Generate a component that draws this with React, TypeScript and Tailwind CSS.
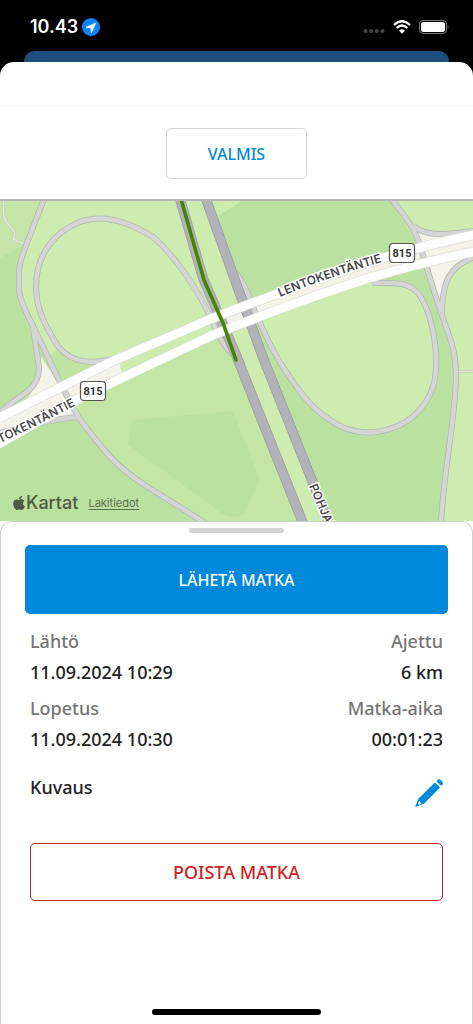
import { FaApple } from "react-icons/fa";

const details = [
  { label: "Lähtö", value: "11.09.2024 10:29" },
  { label: "Ajettu", value: "6 km" },
  { label: "Lopetus", value: "11.09.2024 10:30" },
  { label: "Matka-aika", value: "00:01:23" },
];

// ramps and side roads
const ramps = [
  "M44 199 L27 243 Q19 263 19 272 V290 Q20 301 34 328 L57 376 Q76 416 88 430 C106 453 116 466 143 484 L205 523",
  "M33 328 L38 360 Q42 380 28 391 Q16 400 -3 414",
  "M118 358 C90 365 71 363 58 346 C44 325 36 307 36 287 C36 255 54 232 80 222 C101 214 126 220 153 237 C173 254 196 286 211 318 Q219 340 232 354",
  "M78 417 Q50 419 -3 434",
  "M231 268 Q242 279 247 292 C260 325 270 347 283 367 C302 396 313 411 340 426 C366 438 387 431 400 425 C416 417 435 399 436 369 C437 340 430 310 419 294 C407 281 394 283 372 283",
  "M391 199 Q413 225 418 240 C425 260 433 290 442 315 C450 339 456 350 456 375 C456 416 444 468 441 523",
  "M414 226 Q423 235 446 234 L475 231",
  "M475 257 C449 266 442 282 442 315",
];

const motorways = [
  "M180 199 L203 278 L236 355 L303 523",
  "M206 199 L245 308 L262 355 L329 523",
];

const carriageways = [
  "M-5 420 L63 386 L113 361 L213 318 Q300 284 386 257 Q430 244 478 234",
  "M-5 446 L80 398 L145 367 L213 335 Q300 300 366 279 Q430 260 478 251",
];

const places = "fill-[#484848] stroke-white stroke-[3px] font-semibold text-[12px] font-[Inter,sans-serif] [paint-order:stroke] [stroke-linejoin:round]";

function Shield({ x, y }: { x: number; y: number }) {
  return (
    <g transform={`translate(${x} ${y})`}>
      <rect x="-12.5" y="-9.5" width="25" height="19" rx="3.5" fill="#fff" stroke="#555" strokeWidth="1.2" />
      <text y="4" textAnchor="middle" className="fill-[#333] text-[11px] font-bold font-[Roboto,sans-serif]">
        815
      </text>
    </g>
  );
}

function RouteMap() {
  return (
    <svg viewBox="0 201 473 320" preserveAspectRatio="xMidYMid slice" className="block size-full" role="img" aria-label="Matkan reitti">
      <defs>
        <path id="road-east" d="M280 297 Q330 276 390 260" />
        <path id="road-west" d="M-21 453 Q27 431 88 399" />
        <path id="road-south" d="M309 486 L345 571" />
      </defs>

      {/* land cover */}
      <rect y="201" width="473" height="320" fill="#ceebb0" />
      <path d="M0 201 H44 L19 270 V290 L34 328 L78 417 L143 484 L205 521 H0 Z" fill="#bbe1a0" />
      <path d="M0 201 H44 L24 245 L0 258 Z" fill="#c4e5a7" />
      <path d="M48 360 L58 346 L75 360 L118 358 L66 385 Z" fill="#c0e4a3" />
      <path d="M78 400 L145 370 L228 333 L303 521 H203 L143 484 L78 417 Z" fill="#c4e6a5" />
      <path d="M132 420 L233 411 L260 480 L245 512 Q238 521 222 514 L168 474 L128 445 Z" fill="#bbe1a0" />
      <path d="M213 219 L242 201 H391 L418 245 L300 282 L245 306 Z" fill="#bbe1a0" />
      <path d="M248 310 L262 322 L283 367 C302 396 313 411 340 426 C366 438 387 431 400 425 C416 417 435 399 436 369 C437 340 430 310 419 294 C407 281 394 283 362 282 L430 262 L442 315 L456 375 L441 521 H327 L262 355 Z" fill="#bbe1a0" />

      {/* medians */}
      <g fill="#f5f2e9">
        <path d="M225 314 Q300 284 386 257 L478 234 V251 Q430 260 366 279 Q300 300 228 328 Z" />
        <path d="M-5 420 L63 386 L119 362 L123 377 L80 398 L-5 446 Z" />
        <path d="M416 230 L430 236 L473 234 V258 Q441 270 442 307 L430 270 Z" />
        <path d="M40 355 L60 386 L20 407 Q45 380 40 355 Z" />
        <path d="M40 420 L72 399 L79 417 Z" />
      </g>

      {/* footpaths */}
      <g fill="none" stroke="#bcc7b3" strokeWidth="2.4">
        <path d="M4 201 Q2 217 7 223 L14 231 Q16 235 13 239 L24 244" />
        <path d="M458 372 L473 371" />
      </g>
      <g fill="none" stroke="#e2e6dc" strokeWidth="1.6">
        <path d="M4 201 Q2 217 7 223 L14 231 Q16 235 13 239 L24 244" />
        <path d="M458 372 L473 371" />
      </g>

      <g fill="none" stroke="#b2b8b2" strokeWidth="6">
        {ramps.map((d) => <path key={d} d={d} />)}
      </g>
      <g fill="none" stroke="#d4d6d6" strokeWidth="4.4">
        {ramps.map((d) => <path key={d} d={d} />)}
      </g>
      <g fill="none" stroke="#9b9da3" strokeWidth="10">
        {motorways.map((d) => <path key={d} d={d} />)}
      </g>
      <g fill="none" stroke="#b2b3ba" strokeWidth="8.4">
        {motorways.map((d) => <path key={d} d={d} />)}
      </g>
      <g fill="none" stroke="#d9dbd3" strokeWidth="10">
        {carriageways.map((d) => <path key={d} d={d} />)}
      </g>
      <g fill="none" stroke="#fff" strokeWidth="8.8">
        {carriageways.map((d) => <path key={d} d={d} />)}
      </g>

      {/* driven route */}
      <path d="M181 199 L204 280 L223 323 L236 360" fill="none" stroke="#468400" strokeWidth="3.6" strokeLinecap="round" strokeLinejoin="round" />

      <text className={places}><textPath href="#road-east">LENTOKENTÄNTIE</textPath></text>
      <text className={places}><textPath href="#road-west">LENTOKENTÄNTIE</textPath></text>
      <text className={places}><textPath href="#road-south">POHJANTIE</textPath></text>
      <Shield x={402} y={253} />
      <Shield x={93} y={391} />
    </svg>
  );
}

function StatusBar() {
  return (
    <div className="flex h-[51px] items-center justify-between pl-[30px] pr-6 pt-[2px] text-white">
      <div className="flex items-center gap-1">
        <span className="font-[Inter,sans-serif] text-[18px] font-semibold leading-6">10.43</span>
        <svg viewBox="0 0 54 54" className="size-[18px]" aria-hidden>
          <circle cx="27" cy="27" r="27" fill="#0a84ff" />
          <path d="M40 15 Q42 14 41 17 L30 42 Q28 45 27 42 L26 30 L14 29 Q10 28 14 26 Z" fill="#fff" stroke="#fff" strokeLinejoin="round" />
        </svg>
      </div>
      <div className="flex items-center gap-2">
        <svg viewBox="0 0 22 14" className="h-[14px] w-[22px]" aria-hidden>
          <g fill="#444">
            <circle cx="2.5" cy="11" r="2.1" />
            <circle cx="8.2" cy="11" r="2.1" />
            <circle cx="13.8" cy="11" r="2.1" />
            <circle cx="19.5" cy="11" r="2.1" />
          </g>
        </svg>
        <svg viewBox="0 0 54 42" className="h-[14px] w-[18px]" aria-hidden>
          <g fill="none" stroke="#fff" strokeWidth="7">
            <path d="M3 15 Q27 -8 51 15" />
            <path d="M11 24 Q27 9 43 24" />
          </g>
          <path d="M18 32 Q27 24 36 32 L27 41 Z" fill="#fff" />
        </svg>
        <svg viewBox="0 0 90 42" className="h-[14px] w-[30px]" aria-hidden>
          <rect x="1.5" y="1.5" width="81" height="39" rx="11" fill="none" stroke="#777" strokeWidth="3" />
          <rect x="6" y="6" width="72" height="30" rx="7" fill="#fff" />
          <path d="M86 14 Q91 21 86 28 Z" fill="#777" />
        </svg>
      </div>
    </div>
  );
}

function PencilIcon() {
  return (
    <svg viewBox="0 0 86 86" className="size-7" fill="#0088db" aria-hidden>
      <path d="M69 4 Q74 -2 80 4 Q89 12 84 18 L81 21 L65 7 Z" />
      <path d="M61 11 L77 26 L28 75 L11 60 Z" />
      <path fillRule="evenodd" d="M11 59 L29 75 L0 86 Z M13 67 L9 76 L12 79 L20 76 Z" />
    </svg>
  );
}

export default function App() {
  return (
    <div className="flex min-h-screen flex-col bg-black font-['Noto_Sans',sans-serif]">
      <StatusBar />
      <div className="mx-6 h-[11px] rounded-t-[10px] bg-[#1e4e7e]" />

      <main className="flex grow flex-col rounded-t-[14px] bg-white">
        <div className="h-[45px] border-b border-[#f8f8f8]" />
        <header className="flex justify-center border-b-2 border-[#b5b5b8] pb-5 pt-[21px]">
          <button className="h-[51px] w-[141px] rounded-[5px] border border-[#d6d6d6] text-base font-medium text-[#0088db]">
            VALMIS
          </button>
        </header>

        <div className="relative h-80">
          <RouteMap />
          <div className="absolute bottom-[6px] left-[11px] flex items-center gap-[10px] font-[Inter,sans-serif] text-[#4c5b43]">
            <span className="flex items-center text-[18px] font-medium leading-6">
              <FaApple className="size-4 -mr-px" />
              Kartat
            </span>
            <a href="#lakitiedot" className="text-[11px] leading-4 text-[#5c6e51] underline underline-offset-2">
              Lakitiedot
            </a>
          </div>
        </div>

        <section className="flex grow flex-col rounded-t-xl border-x border-t border-[#d0d0d0] px-6">
          <div className="mx-auto mt-[6px] h-[5px] w-[95px] rounded-full bg-[#d4d4d4]" />
          <button className="mt-3 h-[69px] rounded-[5px] bg-[#0088db] text-base font-medium text-white">
            LÄHETÄ MATKA
          </button>

          <div className="px-[5px] pt-[15px] text-[18px] leading-6">
            <dl className="grid grid-cols-2 gap-y-3 font-medium text-[#212121]">
              {details.map((d) => (
                <div key={d.label} className="flex flex-col gap-[7px] even:text-right">
                  <dt className="text-[#757575]">{d.label}</dt>
                  <dd>{d.value}</dd>
                </div>
              ))}
            </dl>

            <div className="mt-6 flex items-start justify-between">
              <h2 className="font-medium text-[#212121]">Kuvaus</h2>
              <button aria-label="Muokkaa kuvausta" className="mt-1">
                <PencilIcon />
              </button>
            </div>

            <button className="mt-9 h-[58px] w-full rounded-[5px] border border-[#cb2525] font-medium text-[#cb2525]">
              POISTA MATKA
            </button>
          </div>

          <div className="mx-auto mb-[9px] mt-auto h-[6px] w-[169px] rounded-full bg-black" />
        </section>
      </main>
    </div>
  );
}
